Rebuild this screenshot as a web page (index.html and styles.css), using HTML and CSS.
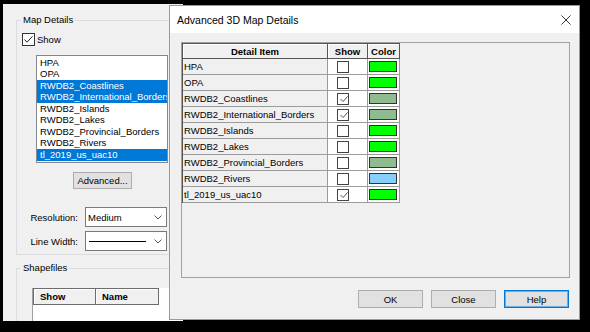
FILE: index.html
```html
<!DOCTYPE html>
<html lang="en">
<head>
  <meta charset="UTF-8">
  <meta name="viewport" content="width=device-width, initial-scale=1.0">
  <title>Advanced 3D Map Details</title>
  <link rel="stylesheet" href="styles.css">
</head>
<body>
<div class="desktop">

  <!-- main window behind the dialog -->
  <div class="main-window">
    <fieldset class="group map-details">
      <legend>Map Details</legend>
      <label class="check-row">
        <span class="checkbox"><svg width="11" height="11" viewBox="0 0 11 11"><path d="M1.5 5.5 L4 8.2 L9.5 2.3" fill="none" stroke="#222" stroke-width="1"/></svg></span>
        Show
      </label>
      <ul class="listbox">
        <li>HPA</li>
        <li>OPA</li>
        <li class="selected">RWDB2_Coastlines</li>
        <li class="selected">RWDB2_International_Borders</li>
        <li>RWDB2_Islands</li>
        <li>RWDB2_Lakes</li>
        <li>RWDB2_Provincial_Borders</li>
        <li>RWDB2_Rivers</li>
        <li class="selected">tl_2019_us_uac10</li>
      </ul>
      <button class="btn advanced">Advanced...</button>
      <div class="field resolution">
        <span class="field-label">Resolution:</span>
        <div class="combo">
          <span class="combo-value">Medium</span>
          <svg class="chevron" width="8" height="5" viewBox="0 0 8 5"><path d="M0.5 0.5 L4 4 L7.5 0.5" fill="none" stroke="#555" stroke-width="1"/></svg>
        </div>
      </div>
      <div class="field">
        <span class="field-label">Line Width:</span>
        <div class="combo">
          <span class="combo-value"><span class="line-sample"></span></span>
          <svg class="chevron" width="8" height="5" viewBox="0 0 8 5"><path d="M0.5 0.5 L4 4 L7.5 0.5" fill="none" stroke="#555" stroke-width="1"/></svg>
        </div>
      </div>
    </fieldset>

    <fieldset class="group shapefiles">
      <legend>Shapefiles</legend>
      <div class="shape-table">
        <div class="shape-head"><span>Show</span><span>Name</span></div>
      </div>
    </fieldset>
  </div>

  <!-- dialog window -->
  <div class="dialog">
    <div class="titlebar">
      <span class="title">Advanced 3D Map Details</span>
      <svg class="close" width="10" height="10" viewBox="0 0 10 10"><path d="M0.5 0.5 L9.5 9.5 M9.5 0.5 L0.5 9.5" stroke="#333" stroke-width="1"/></svg>
    </div>
    <div class="dialog-body">
      <div class="frame">
        <table class="grid">
          <colgroup><col class="w-item"><col class="w-show"><col class="w-color"></colgroup>
          <thead>
            <tr><th>Detail Item</th><th>Show</th><th>Color</th></tr>
          </thead>
          <tbody>
            <tr><td class="c-item">HPA</td><td class="c-show"><span class="cb"></span></td><td class="c-color"><span class="swatch green"></span></td></tr>
            <tr><td class="c-item">OPA</td><td class="c-show"><span class="cb"></span></td><td class="c-color"><span class="swatch green"></span></td></tr>
            <tr><td class="c-item">RWDB2_Coastlines</td><td class="c-show"><span class="cb checked"><svg width="10" height="10" viewBox="0 0 10 10"><path d="M1.5 5 L4 7.5 L8.8 2.3" fill="none" stroke="#555" stroke-width="1"/></svg></span></td><td class="c-color"><span class="swatch sage"></span></td></tr>
            <tr><td class="c-item">RWDB2_International_Borders</td><td class="c-show"><span class="cb checked"><svg width="10" height="10" viewBox="0 0 10 10"><path d="M1.5 5 L4 7.5 L8.8 2.3" fill="none" stroke="#555" stroke-width="1"/></svg></span></td><td class="c-color"><span class="swatch sage"></span></td></tr>
            <tr><td class="c-item">RWDB2_Islands</td><td class="c-show"><span class="cb"></span></td><td class="c-color"><span class="swatch green"></span></td></tr>
            <tr><td class="c-item">RWDB2_Lakes</td><td class="c-show"><span class="cb"></span></td><td class="c-color"><span class="swatch green"></span></td></tr>
            <tr><td class="c-item">RWDB2_Provincial_Borders</td><td class="c-show"><span class="cb"></span></td><td class="c-color"><span class="swatch sage"></span></td></tr>
            <tr><td class="c-item">RWDB2_Rivers</td><td class="c-show"><span class="cb"></span></td><td class="c-color"><span class="swatch sky"></span></td></tr>
            <tr><td class="c-item">tl_2019_us_uac10</td><td class="c-show"><span class="cb checked"><svg width="10" height="10" viewBox="0 0 10 10"><path d="M1.5 5 L4 7.5 L8.8 2.3" fill="none" stroke="#555" stroke-width="1"/></svg></span></td><td class="c-color"><span class="swatch green"></span></td></tr>
          </tbody>
        </table>
      </div>
      <div class="buttons">
        <button class="btn">OK</button>
        <button class="btn">Close</button>
        <button class="btn default">Help</button>
      </div>
    </div>
  </div>

</div>
</body>
</html>
```

FILE: styles.css
```css
* {
  box-sizing: border-box;
}
body {
  margin: 0;
  background: #000;
  font-family: "Liberation Sans", Arial, sans-serif;
  font-size: 9.5px;
  color: #000;
}
.desktop {
  position: relative;
  width: 590px;
  height: 332px;
  overflow: hidden;
}

/* main window */
.main-window {
  width: 180px;
  height: 317px;
  margin: 4px 0 0 3px;
  padding: 10px 0 0 13px;
  background: #f0f0f0;
  overflow: hidden;
}
.group {
  margin: 0;
  padding: 0;
  width: 170px;
  min-width: 0;
  border: 1px solid #dcdcdc;
}
.group legend {
  margin-left: 4px;
  padding: 0 2px;
  line-height: 12px;
}
.map-details {
  padding-bottom: 3px;
}
.check-row {
  display: flex;
  align-items: center;
  gap: 2px;
  margin: 7px 0 0 5px;
  line-height: 13px;
}
.checkbox {
  display: flex;
  width: 13px;
  height: 13px;
  border: 1px solid #333;
  background: #fff;
}
.listbox {
  list-style: none;
  margin: 9px 0 0 19px;
  padding: 0.6px 0 0;
  width: 132px;
  height: 108px;
  border: 1px solid #828790;
  background: #fff;
  overflow: hidden;
}
.listbox li {
  height: 11.55px;
  line-height: 11.55px;
  padding-left: 3px;
  white-space: nowrap;
}
.listbox li.selected {
  background: #0078d7;
  color: #fff;
}
.btn {
  padding: 0;
  font: inherit;
  color: #000;
  background: #e1e1e1;
  border: 1px solid #adadad;
}
.advanced {
  display: block;
  width: 59px;
  height: 17px;
  margin: 9px 0 0 56px;
}
.field {
  display: flex;
  align-items: center;
  gap: 7px;
  margin-top: 4px;
}
.field.resolution {
  margin-top: 18px;
}
.field-label {
  width: 61px;
  text-align: right;
}
.combo {
  display: flex;
  align-items: center;
  width: 82px;
  height: 20px;
  padding-left: 2px;
  border: 1px solid #7a7a7a;
  background: #fff;
}
.combo-value {
  flex: 1;
}
.chevron {
  margin-right: 4px;
}
.line-sample {
  display: block;
  width: 57px;
  height: 1px;
  margin-left: 1px;
  background: #000;
}
.shapefiles {
  margin-top: 7px;
  height: 80px;
}
.shape-table {
  width: 160px;
  height: 60px;
  margin: 14px 0 0 15px;
  background: #fff;
  border-left: 1px solid #a0a0a0;
}
.shape-head {
  display: flex;
  height: 17px;
}
.shape-head span {
  width: 63px;
  padding-left: 6px;
  line-height: 15px;
  font-weight: bold;
  background: #f0f0f0;
  border: 1px solid #6d6d6d;
  box-shadow: inset 1px 1px 0 #fff;
}
.shape-head span + span {
  border-left: none;
}

/* dialog */
.dialog {
  position: absolute;
  left: 169px;
  top: 5px;
  width: 411px;
  height: 315px;
  display: flex;
  flex-direction: column;
  background: #f0f0f0;
  border: 1px solid #9a9a9a;
}
.titlebar {
  display: flex;
  align-items: center;
  justify-content: space-between;
  height: 27px;
  padding: 0 8px 0 7px;
  background: #fff;
}
.title {
  font-size: 10.5px;
}
.dialog-body {
  flex: 1;
  padding: 9px 9px 0 11px;
}
.frame {
  width: 389px;
  height: 236px;
  border: 1px solid #a0a0a0;
}
.grid {
  border-collapse: separate;
  border-spacing: 0;
  table-layout: fixed;
  width: 218px;
  border-top: 1px solid #555;
  border-left: 1px solid #555;
}
.w-item { width: 145px; }
.w-show { width: 40px; }
.w-color { width: 32px; }
.grid th,
.grid td {
  padding: 0;
  white-space: nowrap;
  overflow: hidden;
}
.grid th {
  height: 15px;
  font-weight: bold;
  text-align: center;
  background: #f0f0f0;
  border-right: 1px solid #555;
  border-bottom: 1px solid #555;
  box-shadow: inset 1px 1px 0 #fff;
}
.grid td {
  height: 16px;
  border-right: 1px solid #9b9b9b;
  border-bottom: 1px solid #9b9b9b;
  background: #fff;
}
.grid td.c-item {
  padding-left: 1px;
  background: #f0f0f0;
}
.cb {
  display: block;
  width: 12px;
  height: 12px;
  margin-left: 9px;
  padding: 0.5px;
  border: 1px solid #444;
  background: #fff;
}
.cb svg {
  display: block;
}
.swatch {
  display: block;
  width: 28px;
  height: 11px;
  margin-left: 1px;
  border: 1px solid #333;
}
.green { background: #00ff00; }
.sage { background: #8fbc8f; }
.sky { background: #87cefa; }
.buttons {
  display: flex;
  justify-content: flex-end;
  gap: 8px;
  margin-top: 12px;
  padding-right: 1px;
}
.buttons .btn {
  width: 65px;
  height: 18px;
}
.buttons .default {
  border-color: #0078d7;
  box-shadow: inset 0 0 0 1px rgba(0, 120, 215, 0.5);
}
```
